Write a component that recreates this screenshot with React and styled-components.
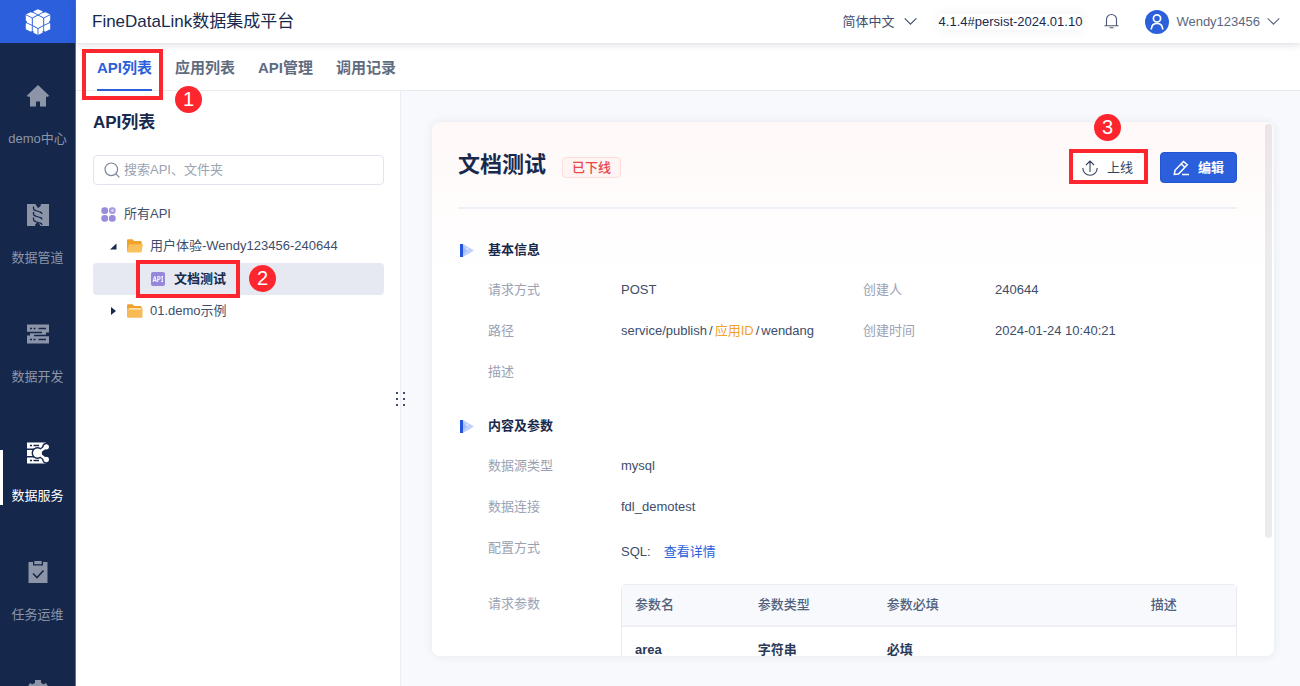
import React from 'react'
import styled, { createGlobalStyle, css } from 'styled-components'

const FONT = "'Liberation Sans', 'Noto Sans CJK SC', sans-serif"

const GlobalStyle = createGlobalStyle`
  * { box-sizing: border-box; }
  body {
    margin: 0;
    font: 13px/20px ${FONT};
    color: #3d4d6b;
    background: #f7f9fd;
  }
  h1, h2, h3, p, ul, dl, dd { margin: 0; padding: 0; }
  ul { list-style: none; }
  a { color: inherit; text-decoration: none; }
  button, input, select { font: inherit; color: inherit; }
  svg { display: block; flex: none; }
`

const Page = styled.div`
  display: flex;
  height: 100vh;
  overflow: hidden;
`

/* sidebar */

const Sidebar = styled.aside`
  flex: none;
  width: 76px;
  overflow: hidden;
  background: #15274b;
  border-right: 1px solid #62708d;
`

const Logo = styled.a`
  display: flex;
  align-items: center;
  justify-content: center;
  height: 43px;
  margin-bottom: 15px;
  background: #2b5fdb;
`

const NavItem = styled.a`
  position: relative;
  display: flex;
  flex-direction: column;
  align-items: center;
  gap: 21px;
  height: 119px;
  padding-top: 26px;
  white-space: nowrap;
  color: ${props => (props.$active ? '#fff' : '#8c95a8')};

  ${props => props.$active && css`
    &::before {
      content: '';
      position: absolute;
      left: 0;
      top: 35px;
      width: 3px;
      height: 55px;
      background: #fff;
    }
  `}
`

/* header */

const Body = styled.div`
  flex: 1;
  min-width: 0;
  display: flex;
  flex-direction: column;
`

const Header = styled.header`
  position: relative;
  z-index: 1;
  flex: none;
  display: flex;
  align-items: center;
  justify-content: space-between;
  height: 43px;
  padding: 0 20px 0 16px;
  background: #fff;
  box-shadow: 0 1px 8px rgba(20, 40, 70, 0.18);
`

const AppTitle = styled.h1`
  font-size: 17px;
  line-height: 24px;
  font-weight: 400;
  color: #172a4d;
`

const HeaderTools = styled.div`
  display: flex;
  align-items: center;
  gap: 22px;
`

const LanguageLabel = styled.label`
  display: flex;
  align-items: center;
  gap: 8px;
`

const LanguageSelect = styled.select`
  appearance: none;
  padding: 0;
  border: 0;
  background: none;
  outline: 0;
`

const Version = styled.span`
  line-height: 16px;
  color: #172a4d;
  box-shadow: 0 0 12px rgba(20, 40, 70, 0.07);
`

const PlainButton = styled.button`
  display: flex;
  align-items: center;
  gap: 7px;
  padding: 0;
  border: 0;
  background: none;
  cursor: pointer;
`

const UserButton = styled(PlainButton)`
  margin-left: 4px;
  color: #5c687f;
`

const Avatar = styled.span`
  display: flex;
  align-items: center;
  justify-content: center;
  width: 24px;
  height: 24px;
  border-radius: 50%;
  background: #2b5fdb;
`

const Tabs = styled.nav`
  flex: none;
  display: flex;
  gap: 23px;
  height: 48px;
  padding: 0 21px;
  background: #fff;
  border-bottom: 1px solid #e9ebf0;
`

const Tab = styled.a`
  position: relative;
  z-index: 1;
  height: 48px;
  font-size: 15px;
  line-height: 50px;
  font-weight: 700;
  color: ${props => (props.$active ? '#2b5fdb' : '#5f6c80')};
  border-bottom: 2px solid ${props => (props.$active ? '#2b5fdb' : 'transparent')};
`

/* numbered walkthrough marks */

const Frame = styled.span`
  position: absolute;
  z-index: 2;
  inset: ${props => props.$inset};
  border: 4px solid #fe262e;
  pointer-events: none;
`

const Step = styled.span`
  position: absolute;
  z-index: 3;
  top: ${props => props.$top}px;
  left: ${props => props.$left}px;
  width: 27px;
  height: 27px;
  border-radius: 50%;
  font-size: 20px;
  line-height: 27px;
  font-weight: 400;
  text-align: center;
  color: #fff;
  background: #fe262e;
`

/* api tree */

const Content = styled.div`
  flex: 1;
  min-height: 0;
  display: flex;
`

const TreePanel = styled.section`
  position: relative;
  flex: none;
  width: 325px;
  padding: 20px 16px 0 17px;
  background: #fff;
  border-right: 1px solid #eceef3;
`

const PanelTitle = styled.h2`
  font-size: 17px;
  line-height: 24px;
  color: #172a4d;
`

const SearchBox = styled.label`
  display: flex;
  align-items: center;
  gap: 4px;
  height: 30px;
  margin: 20px 0 13px;
  padding: 0 10px;
  border: 1px solid #e1e4ec;
  border-radius: 4px;
  color: #7b8699;
`

const SearchInput = styled.input`
  flex: 1;
  min-width: 0;
  padding: 0;
  border: 0;
  outline: 0;
  background: none;

  &::placeholder { color: #9aa3b2; opacity: 1; }
`

const TreeRow = styled.a`
  display: flex;
  align-items: center;
  height: 32px;
  padding-left: ${props => props.$indent}px;
  border-radius: 4px;

  ${props => props.$selected && css`
    font-weight: 700;
    color: #172a4d;
    background: #e6e9f1;
  `}
`

const SubTree = styled.ul`
  margin-top: 1px;
`

const RowLabel = styled.span`
  position: relative;
  display: flex;
  align-items: center;
  gap: ${props => props.$gap || 7}px;
`

const Caret = styled.svg`
  margin-right: 10px;
`

const Resizer = styled.div`
  position: absolute;
  z-index: 1;
  right: -6px;
  top: 300px;
  cursor: col-resize;
`

/* detail card */

const Detail = styled.main`
  flex: 1;
  min-width: 0;
  padding: 31px 26px 30px 31px;
`

const Card = styled.article`
  position: relative;
  display: flex;
  flex-direction: column;
  height: 100%;
  border-radius: 8px;
  background: linear-gradient(#fff8f8, #fff 150px);
  box-shadow: 0 0 8px rgba(30, 50, 90, 0.09);
`

const CardScroll = styled.div`
  flex: 1;
  min-height: 0;
  padding: 31px 37px 0 26px;
  overflow: hidden;
  border-radius: 0 0 8px 8px;
`

const Thumb = styled.div`
  position: absolute;
  top: 2px;
  right: 2px;
  bottom: 118px;
  width: 7px;
  border-radius: 4px;
  background: rgba(40, 40, 80, 0.09);
`

const CardHeader = styled.header`
  flex: none;
  display: flex;
  align-items: center;
  gap: 16px;
  margin: 0 37px 0 26px;
  padding: 30px 0 24px;
  border-bottom: 2px solid #eff0f5;
`

const CardTitle = styled.h2`
  padding-bottom: 6px;
  font-size: 22px;
  line-height: 24px;
  color: #172a4d;
`

const Status = styled.span`
  padding: 0 9px;
  border: 1px solid #ffdcdc;
  border-radius: 4px;
  line-height: 19px;
  font-weight: 500;
  color: #ea4648;
  background: #fff4f4;
`

const Actions = styled.div`
  display: flex;
  gap: 15px;
  margin-left: auto;
`

const ActionButton = styled.button`
  position: relative;
  display: flex;
  align-items: center;
  gap: 9px;
  height: 31px;
  padding: 0 ${props => (props.$primary ? 12 : 11)}px;
  border: 1px solid ${props => (props.$primary ? '#2454cf' : '#d9deea')};
  border-radius: 4px;
  font-weight: ${props => (props.$primary ? 700 : 400)};
  color: ${props => (props.$primary ? '#fff' : '#33435f')};
  background: ${props => (props.$primary ? '#2b5fdb' : '#fff')};
  cursor: pointer;
`

const Section = styled.section`
  margin-bottom: 34px;
`

const SectionTitle = styled.h3`
  display: flex;
  align-items: center;
  gap: 14px;
  margin: 0 0 20px 2px;
  font-size: 13px;
  color: #172a4d;
`

const Fields = styled.dl`
  display: grid;
  grid-template-columns: 133px 1fr 132px 1fr;
  row-gap: 21px;
  padding-left: 30px;
`

const Term = styled.dt`
  padding-top: ${props => props.$offset || 0}px;
  grid-column-start: ${props => props.$col || 1};
  color: #9aa2b3;
`

const Value = styled.dd`
  grid-column: ${props => (props.$wide ? 'span 3' : 'auto')};
`

const ConfigValue = styled(Value)`
  display: flex;
  gap: 13px;
  padding: 4px 0 1px;
`

const AppId = styled.span`
  color: #f3a32d;
`

const Slash = styled.span`
  margin: 0 2px;
`

const Link = styled.a`
  color: #2b5fdb;
`

const ParamTable = styled.table`
  width: 100%;
  table-layout: fixed;
  border: 1px solid #e9ecf3;
  border-radius: 4px;
  border-spacing: 0;
  text-align: left;
`

const HeadCell = styled.th`
  width: ${props => props.$width};
  padding: 10px 13px;
  font-weight: 500;
  color: #52617c;
  background: #f7f9fd;
  border-bottom: 2px solid #eff0f5;
`

const Cell = styled.td`
  padding: 13px;
  font-weight: 700;
  color: #2a3a58;
`

/* icons */

const LogoIcon = () => (
  <svg width="26" height="26" viewBox="0 0 26 26">
    <path fill="#fff" d="M13 .3 17.500 2.200V4L20.500 3.200 25.200 5.500V11.300L23.800 13l1.400 1.500v5.700L20.500 22.600 17.500 22v1.800L13 25.900 8.500 23.800V22l-3 .6L.8 20.200v-5.700L2.200 13 .8 11.300V5.500L5.500 3.200 8.500 4V2.200z" />
    <path fill="#fff" stroke="#2b5fdb" strokeWidth="1" d="M13 6 18.700 9v7.400L13 19.600l-5.700-3.200V9z" />
    <path fill="none" stroke="#2b5fdb" strokeWidth=".9" d="M7.300 9 .8 5.700M18.700 9l6.500-3.300M7.300 16.400.8 13.500M18.700 16.400l6.500-2.900M13 19.600V26M7.300 16.400V23M18.700 16.400V23M8 3.300l5 2.700 5-2.700" />
  </svg>
)

const HomeIcon = () => (
  <svg width="24" height="24" viewBox="0 0 24 24" fill="currentColor">
    <path d="M12 1 23 11.500l-.8 1.300H20V22.500h-6V17.500h-4v5H4V12.800H1.800L1 11.500z" />
  </svg>
)

const PipeIcon = () => (
  <svg width="24" height="24" viewBox="0 0 24 24">
    <path fill="currentColor" d="M1 1h8.500L12 4.500 14.500 3V1H23v22h-8.500L12 19.500 9.500 21v2H1z" />
    <path fill="#15274b" d="M9.500 1h5v2L12 5zM9.500 23h5L12 19.500 9.500 21z" />
    <g fill="none" stroke="#15274b" strokeWidth="1.300">
      <path d="M7.500 3.500v2q0 1.500 2 2l4.500 1.500q2 .5 2 2" />
      <path d="M7.500 9v2q0 1.500 2 2l4.500 1.500q2 .5 2 2" />
      <path d="M7.500 14.500v2q0 1.500 2 2l4.500 1.500q2 .5 2 2" />
    </g>
  </svg>
)

const ServerIcon = () => (
  <svg width="24" height="24" viewBox="0 0 24 24">
    <path fill="currentColor" d="M1 2.500h22v8h-3v3h3v8H1v-8h3v-3H1z" />
    <path stroke="#15274b" strokeWidth="1.400" strokeDasharray="2 1.500" d="M4 6.500h7M4 17.500h7" />
    <path stroke="#15274b" strokeWidth="1.400" d="M12.500 6.500H20M12.500 17.500H20M1 10.500h15M8 13.500h15" />
  </svg>
)

const ShareServerIcon = () => (
  <svg width="24" height="24" viewBox="0 0 24 24">
    <path fill="currentColor" d="M1 1.500h19v6H1zM1 9h7v6H1zM1 16.500h19v6H1z" />
    <path stroke="#15274b" strokeWidth="1.400" d="M4 4.500h2M7.500 4.500H13M4 19.500h2M7.500 19.500H13" />
    <g stroke="#15274b" strokeWidth="1.500" fill="currentColor">
      <path d="m12 12 8-6M12 12l8 6.500" strokeWidth="5" />
      <circle cx="11.500" cy="12" r="5.200" />
      <circle cx="20.300" cy="5.800" r="3.400" />
      <circle cx="20.300" cy="18.500" r="3.400" />
    </g>
    <path stroke="currentColor" strokeWidth="2.800" d="m12 12 8-6M12 12l8 6.500" />
  </svg>
)

const TaskIcon = () => (
  <svg width="24" height="24" viewBox="0 0 24 24">
    <path fill="currentColor" d="M2.500 2H21.500v21h-19z" />
    <path fill="#15274b" d="M7 1h10v4.500H7z" />
    <path fill="currentColor" d="M8.300 1h7.400v3.200H8.300z" />
    <path fill="none" stroke="#15274b" strokeWidth="1.600" d="m7 13.500 4 4 6.500-7" />
  </svg>
)

const GearIcon = () => (
  <svg width="24" height="24" viewBox="0 0 24 24" fill="none" stroke="currentColor">
    <circle cx="12" cy="12" r="6.500" strokeWidth="4.500" />
    <path strokeWidth="6" d="M12 1v3M12 20v3M2.500 6.500l2.600 1.500M18.900 16l2.600 1.500M2.500 17.500 5.100 16M18.900 8l2.600-1.500" />
  </svg>
)

const ChevronIcon = () => (
  <svg width="13" height="13" viewBox="0 0 13 13" fill="none" stroke="currentColor" strokeWidth="1.100">
    <path d="m.7 3.300 5.800 5.900 5.800-5.900" />
  </svg>
)

const BellIcon = () => (
  <svg width="15" height="18" viewBox="0 0 15 18" fill="none" stroke="#4a5872" strokeWidth="1.100">
    <path d="M2.500 12.500V6.500a5 5 0 0 1 10 0v6M.5 12.700h14M5.500 14.700h4" />
  </svg>
)

const PersonIcon = () => (
  <svg width="16" height="18" viewBox="0 0 16 18" fill="none" stroke="#fff" strokeWidth="1.700">
    <circle cx="8" cy="5.400" r="3.600" />
    <path d="M2.200 16.500C2.500 12.500 4.500 10.300 8 10.300s5.500 2.200 5.800 6.200" />
  </svg>
)

const SearchIcon = () => (
  <svg width="16" height="16" viewBox="0 0 16 16" fill="none" stroke="currentColor" strokeWidth="1.200">
    <circle cx="7.300" cy="7.300" r="6.300" />
    <path d="m11.800 11.800 3.600 3.600" />
  </svg>
)

const CloverIcon = () => (
  <svg width="15" height="15" viewBox="0 0 15 15" fill="#9a8bdc">
    <rect x=".3" y=".3" width="6.800" height="6.800" rx="3" />
    <rect x=".3" y="7.900" width="6.800" height="6.800" rx="3" />
    <rect x="7.900" y="7.900" width="6.800" height="6.800" rx="3" />
    <rect x="7.900" y=".3" width="6.800" height="6.800" rx="3" fill="#a99be2" />
    <circle cx="11.500" cy="3.500" r="1.400" fill="#d9d1f4" />
  </svg>
)

const FolderIcon = ({ open }) => (
  <svg width="16" height="14" viewBox="0 0 16 14">
    <path fill="#f0a32c" d="M0 1.500Q0 .3 1.200.3H5.500L7.300 2H13.500q1.200 0 1.200 1.200V12H0z" />
    {open ? (
      <path fill="#f9c15c" d="M2.800 5.300H16L14.600 12.600q-.2 1-1.200 1H1.200Q0 13.600 0 12.400L1.700 6.300q.2-1 1.100-1z" />
    ) : (
      <>
        <path fill="#f7bb55" d="M0 4.500H15.500v8q0 1.200-1.200 1.200H1.200Q0 13.700 0 12.500z" />
        <path fill="#fff3d6" d="M2 4.300h12v1.200H2z" />
      </>
    )}
  </svg>
)

const ApiIcon = () => (
  <svg width="14" height="14" viewBox="0 0 14 14">
    <rect width="14" height="14" rx="2" fill="#9686dc" />
    <path fill="none" stroke="#fff" strokeWidth="1" d="M2 10 3.600 4.500h.4L5.300 10M2.500 8.400h2.600M6.800 10V4.500h1a1.400 1.500 0 0 1 0 3h-1M11.200 4v6M10.300 4.500h1.800M10.300 9.600h1.800" />
  </svg>
)

const PlayIcon = () => (
  <svg width="14" height="13" viewBox="0 0 14 13">
    <path fill="#c0d0fc" d="M3 0 14 6.500 3 13z" />
    <path fill="#8ea9f5" d="M3 2v9l4-4.500z" opacity=".5" />
    <circle cx="7" cy="5" r=".8" fill="#fff" />
    <path fill="#2455dc" d="M0 0h3v13H0z" />
  </svg>
)

const UploadIcon = () => (
  <svg width="16" height="16" viewBox="0 0 16 16" fill="none" stroke="currentColor" strokeWidth="1.100">
    <path d="M8 12V1M4 5l4-4 4 4M.8 8a7.200 7.200 0 0 0 14.400 0" />
  </svg>
)

const EditIcon = () => (
  <svg width="16" height="16" viewBox="0 0 16 16" fill="none" stroke="currentColor" strokeWidth="1.500">
    <path d="M1.300 14.500 2 10.300 10.500 1.500l3.800 3.300-8.800 9.300zM8.200 4l3.800 3.400M9 14.600h7" />
  </svg>
)

const NAV = [
  { label: 'demo中心', Icon: HomeIcon },
  { label: '数据管道', Icon: PipeIcon },
  { label: '数据开发', Icon: ServerIcon },
  { label: '数据服务', Icon: ShareServerIcon, active: true },
  { label: '任务运维', Icon: TaskIcon }
]

const TABS = ['API列表', '应用列表', 'API管理', '调用记录']

const COLUMNS = [
  { title: '参数名', width: '20%' },
  { title: '参数类型', width: '21%' },
  { title: '参数必填', width: '43%' },
  { title: '描述', width: '16%' }
]

const PARAMS = [['area', '字符串', '必填', '']]

function TopBar() {
  return (
    <Header>
      <AppTitle>FineDataLink数据集成平台</AppTitle>
      <HeaderTools>
        <LanguageLabel>
          <LanguageSelect aria-label="语言">
            <option>简体中文</option>
          </LanguageSelect>
          <ChevronIcon />
        </LanguageLabel>
        <Version>4.1.4#persist-2024.01.10</Version>
        <PlainButton aria-label="消息">
          <BellIcon />
        </PlainButton>
        <UserButton aria-haspopup="menu">
          <Avatar>
            <PersonIcon />
          </Avatar>
          Wendy123456
          <ChevronIcon />
        </UserButton>
      </HeaderTools>
    </Header>
  )
}

function ApiTree() {
  return (
    <TreePanel>
      <PanelTitle>API列表</PanelTitle>
      <SearchBox>
        <SearchIcon />
        <SearchInput type="text" aria-label="搜索" placeholder="搜索API、文件夹" />
      </SearchBox>
      <ul>
        <li>
          <TreeRow href="#all" $indent={8}>
            <RowLabel $gap={8}>
              <CloverIcon />
              所有API
            </RowLabel>
          </TreeRow>
        </li>
        <li>
          <TreeRow href="#folder-1" $indent={17}>
            <Caret width="7" height="7" viewBox="0 0 7 7" fill="#172a4d">
              <path d="M6.500.5v6H0z" />
            </Caret>
            <RowLabel>
              <FolderIcon open />
              用户体验-Wendy123456-240644
            </RowLabel>
          </TreeRow>
          <SubTree>
            <li>
              <TreeRow href="#api" $indent={58} $selected>
                <RowLabel $gap={9}>
                  <ApiIcon />
                  文档测试
                  <Frame $inset="-9px -14px -9px -15px" />
                  <Step $top={-4} $left={98}>2</Step>
                </RowLabel>
              </TreeRow>
            </li>
          </SubTree>
        </li>
        <li>
          <TreeRow href="#folder-2" $indent={17}>
            <Caret width="7" height="8" viewBox="0 0 7 8" fill="#172a4d">
              <path d="M1 0v8l5-4z" />
            </Caret>
            <RowLabel>
              <FolderIcon />
              01.demo示例
            </RowLabel>
          </TreeRow>
        </li>
      </ul>
      <Resizer>
        <svg width="11" height="16" viewBox="0 0 11 16" fill="#3d4d6b">
          <path d="M1 1h2v2H1zM8 1h2v2H8zM1 7h2v2H1zM8 7h2v2H8zM1 13h2v2H1zM8 13h2v2H8z" />
        </svg>
      </Resizer>
    </TreePanel>
  )
}

function ApiDetail() {
  return (
    <Detail>
      <Card>
        <CardHeader>
          <CardTitle>文档测试</CardTitle>
          <Status>已下线</Status>
          <Actions>
            <ActionButton>
              <UploadIcon />
              上线
              <Frame $inset="-4px -4px -2px -2px" />
              <Step $top={-39} $left={23}>3</Step>
            </ActionButton>
            <ActionButton $primary>
              <EditIcon />
              编辑
            </ActionButton>
          </Actions>
        </CardHeader>

        <CardScroll>
          <Section>
            <SectionTitle>
              <PlayIcon />
              基本信息
            </SectionTitle>
            <Fields>
              <Term>请求方式</Term>
              <Value>POST</Value>
              <Term $col={3}>创建人</Term>
              <Value>240644</Value>
              <Term>路径</Term>
              <Value>
                service/publish<Slash>/</Slash><AppId>应用ID</AppId><Slash>/</Slash>wendang
              </Value>
              <Term $col={3}>创建时间</Term>
              <Value>2024-01-24 10:40:21</Value>
              <Term>描述</Term>
              <Value $wide />
            </Fields>
          </Section>

          <Section>
            <SectionTitle>
              <PlayIcon />
              内容及参数
            </SectionTitle>
            <Fields>
              <Term>数据源类型</Term>
              <Value $wide>mysql</Value>
              <Term>数据连接</Term>
              <Value $wide>fdl_demotest</Value>
              <Term>配置方式</Term>
              <ConfigValue $wide>
                SQL:
                <Link href="#sql">查看详情</Link>
              </ConfigValue>
              <Term $offset={10}>请求参数</Term>
              <Value $wide>
                <ParamTable>
                  <thead>
                    <tr>
                      {COLUMNS.map(col => (
                        <HeadCell key={col.title} $width={col.width}>{col.title}</HeadCell>
                      ))}
                    </tr>
                  </thead>
                  <tbody>
                    {PARAMS.map(row => (
                      <tr key={row[0]}>
                        {row.map((text, index) => <Cell key={index}>{text}</Cell>)}
                      </tr>
                    ))}
                  </tbody>
                </ParamTable>
              </Value>
            </Fields>
          </Section>
        </CardScroll>
        <Thumb />
      </Card>
    </Detail>
  )
}

function App() {
  return (
    <Page>
      <GlobalStyle />
      <Sidebar>
        <Logo href="#home" aria-label="FineDataLink">
          <LogoIcon />
        </Logo>
        <nav>
          {NAV.map(({ label, Icon, active }) => (
            <NavItem key={label} href="#nav" $active={active}>
              <Icon />
              {label}
            </NavItem>
          ))}
          <NavItem href="#settings" aria-label="系统管理">
            <GearIcon />
          </NavItem>
        </nav>
      </Sidebar>
      <Body>
        <TopBar />
        <Tabs>
          {TABS.map((label, index) => (
            <Tab key={label} href="#tab" $active={index === 0}>
              {label}
              {index === 0 && (
                <>
                  <Frame $inset="6px -11px -11px -15px" />
                  <Step $top={43} $left={78}>1</Step>
                </>
              )}
            </Tab>
          ))}
        </Tabs>
        <Content>
          <ApiTree />
          <ApiDetail />
        </Content>
      </Body>
    </Page>
  )
}

export default App
